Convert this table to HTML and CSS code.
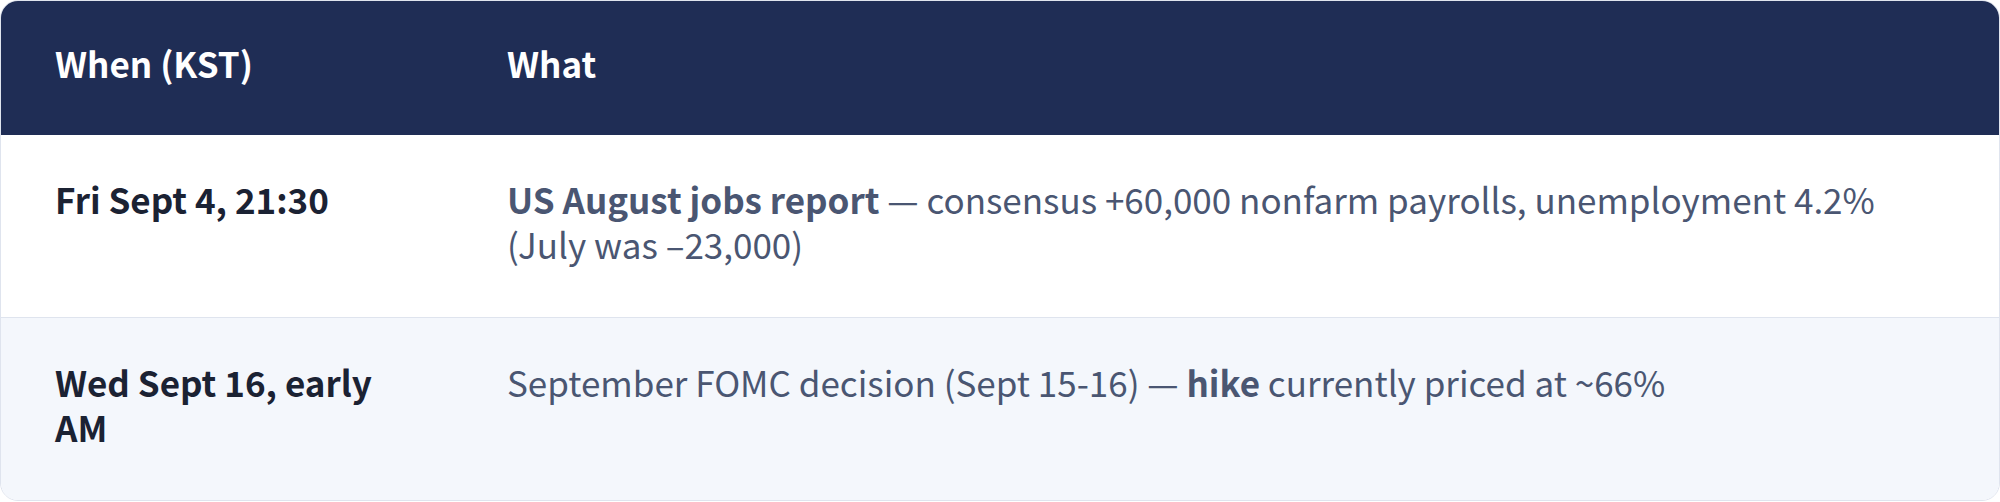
FILE: index.html
```html
<!DOCTYPE html>
<html lang="en">
<head>
<meta charset="utf-8">
<title>Schedule</title>
<link rel="stylesheet" href="styles.css">
</head>
<body>
<div class="card">
  <table class="schedule">
    <colgroup>
      <col class="col-when">
      <col class="col-what">
    </colgroup>
    <thead>
      <tr>
        <th>When (KST)</th>
        <th>What</th>
      </tr>
    </thead>
    <tbody>
      <tr>
        <td class="when">Fri Sept 4, 21:30</td>
        <td class="what"><strong>US August jobs report</strong> — consensus +60,000 nonfarm payrolls, unemployment 4.2% (July was –23,000)</td>
      </tr>
      <tr class="alt">
        <td class="when">Wed Sept 16, early AM</td>
        <td class="what">September FOMC decision (Sept 15-16) — <strong>hike</strong> currently priced at ~66%</td>
      </tr>
    </tbody>
  </table>
</div>
</body>
</html>
```

FILE: styles.css
```css
html, body {
  margin: 0;
  padding: 0;
  background: #ffffff;
}

body {
  font-family: "Noto Sans CJK KR", "Noto Sans", sans-serif;
  font-size: 35px;
  line-height: 45px;
}

.card {
  border: 1px solid #dfe4ee;
  border-radius: 18px;
  overflow: hidden;
  background: #ffffff;
}

.schedule {
  width: 100%;
  border-collapse: collapse;
  table-layout: fixed;
}

.col-when {
  width: 452px;
}

.schedule th {
  background: #1f2d55;
  color: #ffffff;
  font-weight: 700;
  text-align: left;
  padding: 39px 54px 50px;
}

.schedule td {
  padding: 41px 54px 51px;
  vertical-align: top;
  border-top: 1px solid #dfe4ee;
}

.schedule thead + tbody tr:first-child td {
  border-top: none;
}

.when {
  color: #1b2233;
  font-weight: 700;
}

.what {
  color: #4a5672;
}

.what strong {
  font-weight: 700;
}

.alt td {
  background: #f4f7fc;
}
```
